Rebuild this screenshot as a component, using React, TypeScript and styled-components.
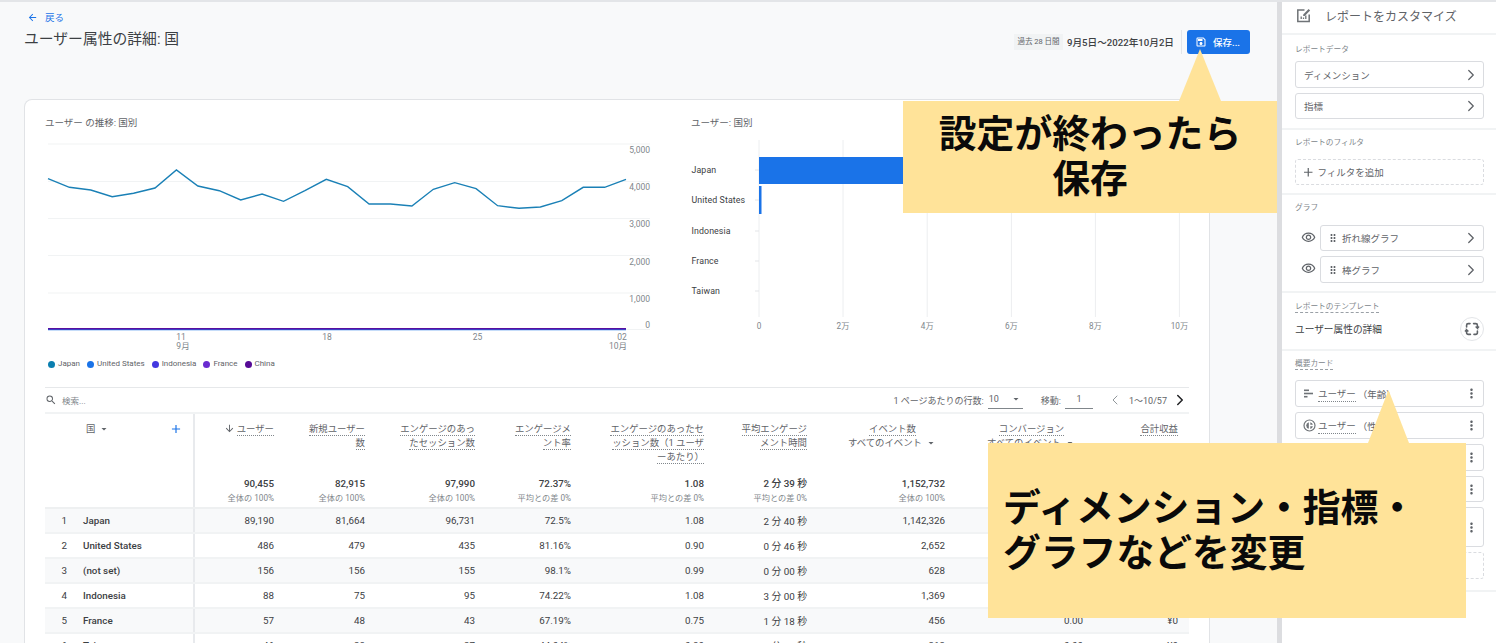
import React from "react";
import styled, { createGlobalStyle } from "styled-components";
import { ChevronLeft, ChevronRight } from "lucide-react";
import {
  MdArrowBack,
  MdArrowDownward,
  MdArrowDropDown,
  MdAdd,
  MdDragIndicator,
  MdMoreVert,
  MdOutlineSave,
  MdOutlineVisibility,
  MdSearch,
} from "react-icons/md";

const FONT = `Roboto, "Noto Sans CJK JP", sans-serif`;

const GlobalStyle = createGlobalStyle`
  html, body { margin: 0; padding: 0; background: #fff; }
  body { font-family: ${FONT}; color: #3c4043; }
  * { box-sizing: border-box; }
`;

const Page = styled.div`
  position: relative;
  width: 1496px;
  height: 643px;
  overflow: hidden;
  display: flex;
  border-top: 2px solid #e3e5e8;
`;

const Main = styled.main`
  width: 1277px;
  flex: none;
  background: #f8f9fa;
  display: flex;
  flex-direction: column;
`;

const Header = styled.header`
  height: 97px;
  flex: none;
  display: flex;
  justify-content: space-between;
  align-items: flex-start;
  padding: 0 27px 0 24px;
`;

const BackLink = styled.a`
  display: flex;
  align-items: center;
  gap: 7px;
  height: 14px;
  margin: 8px 0 0 3px;
  font-size: 9.5px;
  color: #1a73e8;
  svg { font-size: 11px; }
`;

const Title = styled.h1`
  margin: 5px 0 0;
  font-size: 14.8px;
  line-height: 20px;
  font-weight: 400;
  color: #3c4043;
`;

const HeaderActions = styled.div`
  display: flex;
  align-items: center;
  margin-top: 28px;
  height: 24px;
`;

const RangeChip = styled.span`
  width: 49px;
  height: 16px;
  background: #f1f3f4;
  font-size: 7.5px;
  line-height: 15px;
  text-align: center;
  color: #5f6368;
`;

const DateText = styled.span`
  margin-left: 4px;
  padding-bottom: 1px;
  font-size: 9.64px;
  font-weight: 500;
  color: #3c4043;
`;

const Divider = styled.span`
  width: 1px;
  height: 24px;
  margin: 0 5px 0 7px;
  background: #e3e5e8;
`;

const SaveButton = styled.button`
  width: 63px;
  height: 24px;
  border: 0;
  border-radius: 3px;
  background: #1a73e8;
  color: #fff;
  font-family: ${FONT};
  font-size: 9.5px;
  font-weight: 500;
  display: flex;
  align-items: center;
  gap: 6px;
  padding: 0 0 0 8px;
  svg { font-size: 12px; }
`;

const Card = styled.section`
  width: 1186px;
  margin-left: 24px;
  flex: 1;
  background: #fff;
  border: 1px solid #e1e3e6;
  border-bottom: 0;
  border-radius: 8px 8px 0 0;
  padding: 0 20px;
  min-height: 0;
`;

const Charts = styled.div`
  height: 287px;
  display: grid;
  grid-template-columns: 646px 1fr;
`;

const ChartColumn = styled.div`
  display: flex;
  flex-direction: column;
`;

const ChartTitle = styled.h2`
  margin: 16px 0 0;
  height: 14px;
  font-size: 9.5px;
  line-height: 14px;
  font-weight: 400;
  color: #5f6368;
`;

const ChartSvg = styled.svg`
  display: block;
  margin-top: 3px;
  font-family: ${FONT};
`;

const Legend = styled.ul`
  display: flex;
  gap: 7px;
  margin: 1px 0 0;
  padding: 0 0 0 3px;
  list-style: none;
  font-size: 8px;
  line-height: 12px;
  color: #5f6368;
`;

const LegendItem = styled.li<{ $color: string }>`
  display: flex;
  align-items: center;
  gap: 3px;
  &::before {
    content: "";
    width: 7px;
    height: 7px;
    border-radius: 50%;
    background: ${(p) => p.$color};
  }
`;

const Toolbar = styled.div`
  height: 27px;
  display: flex;
  align-items: center;
  border-top: 1px solid #e6e8ea;
  border-bottom: 2px solid #f1f3f4;
  font-size: 9px;
  color: #5f6368;
`;

const SearchBox = styled.div`
  display: flex;
  align-items: center;
  gap: 5px;
  font-size: 8.5px;
  color: #80868b;
  svg { font-size: 12px; color: #5f6368; }
`;

const Pager = styled.div`
  margin-left: auto;
  display: flex;
  align-items: center;
`;

const UnderlinedField = styled.span<{ $width: number; $gap: number }>`
  display: flex;
  align-items: center;
  justify-content: space-between;
  width: ${(p) => p.$width}px;
  height: 17px;
  margin: 0 ${(p) => p.$gap}px 0 4px;
  padding: 0 1px 2px;
  border-bottom: 1px solid #80868b;
  svg { font-size: 12px; }
`;

const JumpValue = styled.span`
  margin: 0 auto;
`;

const PagerRange = styled.span`
  margin: 0 4px 0 6px;
`;

const COLUMNS = "150px 79px 91px 110px 96px 133px 103px 138px 138px 95px";

const Row = styled.div<{ $shaded?: boolean }>`
  display: grid;
  grid-template-columns: ${COLUMNS};
  height: 25px;
  align-items: center;
  font-size: 9.8px;
  color: #3c4043;
  background: ${(p) => (p.$shaded ? "#f8f9fa" : "#fff")};
  border-bottom: 2px solid #f1f3f4;
`;

const HeadRow = styled.div`
  display: grid;
  grid-template-columns: ${COLUMNS};
  height: 57px;
  font-size: 9.4px;
  line-height: 14px;
  color: #5f6368;
`;

const TotalRow = styled.div`
  display: grid;
  grid-template-columns: ${COLUMNS};
  height: 38px;
  border-bottom: 2px solid #eef0f1;
`;

const DimensionHead = styled.div`
  height: 57px;
  border-right: 2px solid #e8eaed;
  display: flex;
  align-items: flex-start;
  padding: 8px 10px 0 41px;
  svg { font-size: 12px; }
`;

const AddDimension = styled.span`
  margin-left: auto;
  display: flex;
  color: #1a73e8;
  svg { font-size: 14px; }
`;

const MetricHead = styled.div<{ $pad?: number }>`
  padding: 8px ${(p) => p.$pad ?? 0}px 0 0;
  text-align: right;
  white-space: nowrap;
`;

const CenteredStack = styled.span`
  display: inline-block;
  text-align: center;
`;

const Dotted = styled.span`
  border-bottom: 1px dotted #80868b;
  padding-bottom: 1px;
`;

const SortIcon = styled.span`
  display: inline-block;
  vertical-align: -2px;
  margin-right: 2px;
  font-size: 11px;
  svg { display: block; }
`;

const SelectLine = styled.span`
  display: inline-flex;
  align-items: center;
  gap: 3px;
  svg { font-size: 12px; }
`;

const BlankCell = styled.div`
  height: 100%;
  border-right: 2px solid #e8eaed;
`;

const TotalCell = styled.div`
  padding-top: 6px;
  text-align: right;
`;

const TotalValue = styled.div`
  font-size: 9.8px;
  line-height: 14px;
  font-weight: 500;
  color: #3c4043;
`;

const TotalNote = styled.div`
  font-size: 8.2px;
  line-height: 14px;
  color: #80868b;
`;

const NameCell = styled.div`
  height: 100%;
  display: flex;
  align-items: center;
  border-right: 2px solid #e8eaed;
  font-weight: 500;
`;

const Rank = styled.span`
  width: 38px;
  padding-right: 16px;
  text-align: right;
  font-weight: 400;
`;

const ValueCell = styled.div`
  text-align: right;
`;

const Sidebar = styled.aside`
  flex: 1;
  min-width: 0;
  background: #fff;
  border-left: 5px solid #dcdde0;
  display: flex;
  flex-direction: column;
`;

const SideTitle = styled.div`
  height: 33px;
  flex: none;
  display: flex;
  align-items: center;
  gap: 14px;
  padding: 0 0 4px 14px;
  border-bottom: 2px solid #f1f3f4;
  font-size: 12px;
  color: #5f6368;
`;

const SideSection = styled.div<{ $height: number; $top?: number }>`
  height: ${(p) => p.$height}px;
  flex: none;
  padding: ${(p) => p.$top ?? 7}px 12px 0 13px;
  border-bottom: 2px solid #f1f3f4;
`;

const SideLabel = styled.div<{ $gap?: number }>`
  font-size: 7.7px;
  line-height: 12px;
  color: #80868b;
  margin-bottom: ${(p) => p.$gap ?? 5}px;
`;

const DottedLabel = styled.span`
  border-bottom: 1px dashed #9aa0a6;
  padding-bottom: 1px;
`;

const SideBox = styled.div<{ $height?: number; $dashed?: boolean; $inset?: number }>`
  height: ${(p) => p.$height ?? 27}px;
  margin-bottom: 5px;
  padding: 0 3px 0 ${(p) => p.$inset ?? 8}px;
  display: flex;
  align-items: center;
  gap: 2px;
  border: 1px ${(p) => (p.$dashed ? "dashed" : "solid")} #dadce0;
  border-radius: 3px;
  font-size: 9.5px;
  color: #5f6368;
  flex: 1;
  min-width: 0;
  white-space: nowrap;
  overflow: hidden;
`;

const BoxEnd = styled.span`
  margin-left: auto;
  width: 18px;
  display: flex;
  justify-content: center;
  font-size: 15px;
  color: #5f6368;
  flex: none;
`;

const AddIcon = styled.span`
  display: flex;
  margin-left: -3px;
  font-size: 14.5px;
`;

const GraphRow = styled.div`
  display: flex;
  align-items: flex-start;
  gap: 4px;
  margin-left: 6px;
`;

const EyeIcon = styled.span`
  display: flex;
  margin-top: 5px;
  font-size: 15px;
  color: #5f6368;
`;

const Grip = styled.span`
  display: flex;
  font-size: 12px;
  margin-right: 1px;
`;

const TemplateRow = styled.div`
  display: flex;
  align-items: center;
  justify-content: space-between;
  font-size: 9.7px;
  color: #3c4043;
`;

const RoundButton = styled.span`
  width: 24px;
  height: 24px;
  border: 1px solid #e3e5e8;
  border-radius: 50%;
  display: flex;
  align-items: center;
  justify-content: center;
`;

const CardIcon = styled.span`
  display: flex;
  width: 13px;
  color: #5f6368;
`;

const CalloutBox = styled.div<{ $left: number; $top: number; $width: number; $height: number; $center?: boolean }>`
  position: absolute;
  left: ${(p) => p.$left}px;
  top: ${(p) => p.$top - 2}px;
  width: ${(p) => p.$width}px;
  height: ${(p) => p.$height}px;
  background: #ffe399;
  display: flex;
  flex-direction: column;
  justify-content: center;
  padding: ${(p) => (p.$center ? "0 0 6px" : "0 0 5px 15px")};
  text-align: ${(p) => (p.$center ? "center" : "left")};
  font-family: "Noto Sans CJK JP", sans-serif;
  font-size: 37.8px;
  font-weight: 700;
  line-height: 44.8px;
  color: #0a0a0a;
  white-space: nowrap;
`;

const CalloutTip = styled.span<{ $left: number; $width: number; $height: number }>`
  position: absolute;
  left: ${(p) => p.$left}px;
  top: ${(p) => -p.$height}px;
  width: ${(p) => p.$width}px;
  height: ${(p) => p.$height}px;
  background: #ffe399;
  clip-path: polygon(50% 0, 100% 100%, 0 100%);
`;

const lineY = [536, 562, 570, 590, 580, 564, 510, 558, 572, 600, 582, 604, 572, 538, 560, 612, 612, 618, 568, 548, 566, 617, 625, 621, 602, 562, 562, 538];
const linePoints = lineY.map((y, i) => `${(48 + (i * 578) / 27).toFixed(1)},${(y / 3).toFixed(1)}`).join(" ");

const yAxis = [
  { label: "5,000", line: 144, text: 153 },
  { label: "4,000", line: 181.5, text: 190 },
  { label: "3,000", line: 218.5, text: 227 },
  { label: "2,000", line: 255.5, text: 265 },
  { label: "1,000", line: 293, text: 302 },
  { label: "0", line: 329.5, text: 328 },
];

const xAxis = [
  { label: "11", sub: "9月", x: 181, subX: 183 },
  { label: "18", x: 327 },
  { label: "25", x: 477.5 },
  { label: "02", sub: "10月", x: 622, subX: 618 },
];

const legend = [
  { name: "Japan", color: "#0b7fb0" },
  { name: "United States", color: "#1a73e8" },
  { name: "Indonesia", color: "#4338e0" },
  { name: "France", color: "#6a2bd0" },
  { name: "China", color: "#560a96" },
];

function LineChart() {
  return (
    <ChartSvg width={626} height={224} viewBox="45 133 626 224">
      {yAxis.map((t) => (
        <g key={t.label}>
          <line x1={48} x2={650} y1={t.line} y2={t.line} stroke="#f1f3f4" strokeWidth={1.2} />
          <text x={650} y={t.text} textAnchor="end" fontSize={8.5} fill="#80868b">
            {t.label}
          </text>
        </g>
      ))}
      <polyline points={linePoints} fill="none" stroke="#1a80b6" strokeWidth={1.4} />
      <line x1={48} x2={626} y1={329.6} y2={329.6} stroke="#1a73e8" strokeWidth={1.5} />
      <line x1={48} x2={626} y1={328.8} y2={328.8} stroke="#5a0fa0" strokeWidth={1.6} />
      {xAxis.map((t) => (
        <g key={t.label} fontSize={8.5} fill="#80868b" textAnchor="middle">
          <text x={t.x} y={340}>
            {t.label}
          </text>
          {t.sub && (
            <text x={t.subX} y={349}>
              {t.sub}
            </text>
          )}
        </g>
      ))}
    </ChartSvg>
  );
}

const barTicks = [
  { label: "0", x: 759 },
  { label: "2万", x: 843 },
  { label: "4万", x: 927.2 },
  { label: "6万", x: 1011.4 },
  { label: "8万", x: 1095.4 },
  { label: "10万", x: 1179.4 },
];

const barRows = [
  { label: "Japan", y: 170 },
  { label: "United States", y: 200 },
  { label: "Indonesia", y: 231 },
  { label: "France", y: 261 },
  { label: "Taiwan", y: 291 },
];

function BarChart() {
  return (
    <ChartSvg width={499} height={224} viewBox="691 133 499 224">
      {barTicks.map((t) => (
        <g key={t.label}>
          <line x1={t.x} x2={t.x} y1={140} y2={317} stroke="#eceef0" strokeWidth={1} />
          <text x={t.x} y={329} textAnchor="middle" fontSize={8.2} fill="#80868b">
            {t.label}
          </text>
        </g>
      ))}
      {barRows.map((r) => (
        <g key={r.label}>
          <line x1={755} x2={759} y1={r.y} y2={r.y} stroke="#e3e5e8" />
          <text x={691.5} y={r.y + 3} fontSize={8.8} letterSpacing={0.1} fill="#3c4043">
            {r.label}
          </text>
        </g>
      ))}
      <rect x={759} y={157} width={375} height={27} fill="#1a73e8" />
      <rect x={759} y={186} width={2.5} height={28} fill="#1a73e8" />
    </ChartSvg>
  );
}

const totals = [
  ["90,455", "全体の 100%"],
  ["82,915", "全体の 100%"],
  ["97,990", "全体の 100%"],
  ["72.37%", "平均との差 0%"],
  ["1.08", "平均との差 0%"],
  ["2 分 39 秒", "平均との差 0%"],
  ["1,152,732", "全体の 100%"],
  ["3,126.00", "全体の 100%"],
  ["¥0", ""],
];

const rows = [
  ["Japan", "89,190", "81,664", "96,731", "72.5%", "1.08", "2 分 40 秒", "1,142,326", "3,098.00", "¥0"],
  ["United States", "486", "479", "435", "81.16%", "0.90", "0 分 46 秒", "2,652", "2.00", "¥0"],
  ["(not set)", "156", "156", "155", "98.1%", "0.99", "0 分 00 秒", "628", "0.00", "¥0"],
  ["Indonesia", "88", "75", "95", "74.22%", "1.08", "3 分 00 秒", "1,369", "0.00", "¥0"],
  ["France", "57", "48", "43", "67.19%", "0.75", "1 分 18 秒", "456", "0.00", "¥0"],
  ["Taiwan", "46", "38", "37", "44.04%", "0.80", "1 分 07 秒", "313", "0.00", "¥0"],
];

function ReportTable() {
  return (
    <>
      <Toolbar>
        <SearchBox>
          <MdSearch />
          検索...
        </SearchBox>
        <Pager>
          1 ページあたりの行数:
          <UnderlinedField $width={35} $gap={18}>
            10
            <MdArrowDropDown />
          </UnderlinedField>
          移動:
          <UnderlinedField $width={28} $gap={14}>
            <JumpValue>1</JumpValue>
          </UnderlinedField>
          <ChevronLeft size={16} strokeWidth={1.3} color="#80868b" />
          <PagerRange>1〜10/57</PagerRange>
          <ChevronRight size={18} strokeWidth={2} color="#202124" />
        </Pager>
      </Toolbar>
      <HeadRow>
        <DimensionHead>
          <SelectLine>
            国
            <MdArrowDropDown />
          </SelectLine>
          <AddDimension>
            <MdAdd />
          </AddDimension>
        </DimensionHead>
        <MetricHead>
          <SortIcon>
            <MdArrowDownward />
          </SortIcon>
          <Dotted>ユーザー</Dotted>
        </MetricHead>
        <MetricHead>
          <Dotted>新規ユーザー</Dotted>
          <br />
          <Dotted>数</Dotted>
        </MetricHead>
        <MetricHead>
          <Dotted>エンゲージのあっ</Dotted>
          <br />
          <Dotted>たセッション数</Dotted>
        </MetricHead>
        <MetricHead>
          <Dotted>エンゲージメ</Dotted>
          <br />
          <Dotted>ント率</Dotted>
        </MetricHead>
        <MetricHead>
          <Dotted>エンゲージのあったセ</Dotted>
          <br />
          <Dotted>ッション数（1 ユーザ</Dotted>
          <br />
          <Dotted>ーあたり）</Dotted>
        </MetricHead>
        <MetricHead>
          <Dotted>平均エンゲージ</Dotted>
          <br />
          <Dotted>メント時間</Dotted>
        </MetricHead>
        <MetricHead $pad={8}>
          <CenteredStack>
            <Dotted>イベント数</Dotted>
            <br />
            <SelectLine>
              すべてのイベント
              <MdArrowDropDown />
            </SelectLine>
          </CenteredStack>
        </MetricHead>
        <MetricHead $pad={7}>
          <CenteredStack>
            <Dotted>コンバージョン</Dotted>
            <br />
            <SelectLine>
              すべてのイベント
              <MdArrowDropDown />
            </SelectLine>
          </CenteredStack>
        </MetricHead>
        <MetricHead>
          <Dotted>合計収益</Dotted>
        </MetricHead>
      </HeadRow>
      <TotalRow>
        <BlankCell />
        {totals.map(([value, note], i) => (
          <TotalCell key={i}>
            <TotalValue>{value}</TotalValue>
            <TotalNote>{note}</TotalNote>
          </TotalCell>
        ))}
      </TotalRow>
      {rows.map(([name, ...values], i) => (
        <Row key={name} $shaded={i % 2 === 0}>
          <NameCell>
            <Rank>{i + 1}</Rank>
            {name}
          </NameCell>
          {values.map((v, j) => (
            <ValueCell key={j}>{v}</ValueCell>
          ))}
        </Row>
      ))}
    </>
  );
}

function CustomizeIcon() {
  return (
    <svg width="15" height="15" viewBox="0 0 15 15" fill="none" stroke="#6f7377" strokeWidth="1.5">
      <path d="M8.5 2H1.8v11.4h11.4V6.5" />
      <path d="M5.2 11V8.6M7.5 11V9.6M9.8 11V7.6" strokeWidth="1.3" />
      <path d="M7.2 6.4 12.6.9l1.5 1.5-5.4 5.5H7.2z" fill="#6f7377" stroke="none" />
    </svg>
  );
}

function ChangeTemplateIcon() {
  return (
    <svg width="16" height="16" viewBox="0 0 16 16" fill="none" stroke="#5f6368" strokeWidth="1.6" strokeLinecap="round">
      <path d="M2.6 6V4.2a1.6 1.6 0 0 1 1.6-1.6H6" />
      <path d="M13.4 10v1.8a1.6 1.6 0 0 1-1.6 1.6H10" />
      <path d="M9.6 2.6h2.2a1.6 1.6 0 0 1 1.6 1.6v3l-1.3-1.2M13.4 7.2l1.2-1.2" />
      <path d="M6.4 13.4H4.2a1.6 1.6 0 0 1-1.6-1.6v-3l1.3 1.2M2.6 8.8 1.4 10" />
    </svg>
  );
}

function BarListIcon() {
  return (
    <svg width="11" height="11" viewBox="0 0 11 11" fill="#6f7377">
      <rect x="1" y="1.5" width="5" height="1.6" />
      <rect x="1" y="4.7" width="9" height="1.6" />
      <rect x="1" y="7.9" width="3.5" height="1.6" />
    </svg>
  );
}

function DonutIcon() {
  return (
    <svg width="13" height="13" viewBox="0 0 13 13" fill="#6f7377">
      <circle cx="6.5" cy="6.5" r="5.5" fill="none" stroke="#6f7377" strokeWidth="1.2" />
      <path d="M7.3 3.2a3.4 3.4 0 0 1 2.6 2.6H7.3z" />
      <path d="M5.8 3.2a3.4 3.4 0 0 0 0 6.6z" />
      <path d="M7.3 7.3h2.6a3.4 3.4 0 0 1-2.6 2.6z" />
    </svg>
  );
}

const summaryCards = [
  { suffix: "（年齢）", height: 27, icon: <BarListIcon /> },
  { suffix: "（性別）", height: 27, icon: <DonutIcon /> },
  { suffix: "（国）", height: 27, icon: <BarListIcon /> },
  { suffix: "（市区町村）", height: 26, icon: <BarListIcon /> },
  { suffix: "（言語）", height: 40, icon: <BarListIcon /> },
];

function CustomizePanel() {
  return (
    <Sidebar>
      <SideTitle>
        <CustomizeIcon />
        レポートをカスタマイズ
      </SideTitle>
      <SideSection $height={95} $top={9}>
        <SideLabel>レポートデータ</SideLabel>
        <SideBox>
          ディメンション
          <BoxEnd>
            <ChevronRight size={18} strokeWidth={1.7} />
          </BoxEnd>
        </SideBox>
        <SideBox $height={26}>
          指標
          <BoxEnd>
            <ChevronRight size={18} strokeWidth={1.7} />
          </BoxEnd>
        </SideBox>
      </SideSection>
      <SideSection $height={65}>
        <SideLabel $gap={10}>レポートのフィルタ</SideLabel>
        <SideBox $height={26} $dashed>
          <AddIcon>
            <MdAdd />
          </AddIcon>
          フィルタを追加
        </SideBox>
      </SideSection>
      <SideSection $height={98}>
        <SideLabel $gap={11}>グラフ</SideLabel>
        <GraphRow>
          <EyeIcon>
            <MdOutlineVisibility />
          </EyeIcon>
          <SideBox $height={26} $inset={6}>
            <Grip>
              <MdDragIndicator />
            </Grip>
            折れ線グラフ
            <BoxEnd>
              <ChevronRight size={18} strokeWidth={1.7} />
            </BoxEnd>
          </SideBox>
        </GraphRow>
        <GraphRow>
          <EyeIcon>
            <MdOutlineVisibility />
          </EyeIcon>
          <SideBox $inset={6}>
            <Grip>
              <MdDragIndicator />
            </Grip>
            棒グラフ
            <BoxEnd>
              <ChevronRight size={18} strokeWidth={1.7} />
            </BoxEnd>
          </SideBox>
        </GraphRow>
      </SideSection>
      <SideSection $height={58} $top={8}>
        <SideLabel $gap={4}>
          <DottedLabel>レポートのテンプレート</DottedLabel>
        </SideLabel>
        <TemplateRow>
          ユーザー属性の詳細
          <RoundButton>
            <ChangeTemplateIcon />
          </RoundButton>
        </TemplateRow>
      </SideSection>
      <SideSection $height={241}>
        <SideLabel $gap={10}>
          <DottedLabel>概要カード</DottedLabel>
        </SideLabel>
        {summaryCards.map((c) => (
          <SideBox key={c.suffix} $height={c.height} $inset={7}>
            <CardIcon>{c.icon}</CardIcon>
            <Dotted>ユーザー</Dotted>
            {c.suffix}
            <BoxEnd>
              <MdMoreVert />
            </BoxEnd>
          </SideBox>
        ))}
        <SideBox $dashed>
          <AddIcon>
            <MdAdd />
          </AddIcon>
          カードを作成
        </SideBox>
      </SideSection>
    </Sidebar>
  );
}

export default function App() {
  return (
    <>
      <GlobalStyle />
      <Page>
        <Main>
          <Header>
            <div>
              <BackLink>
                <MdArrowBack />
                戻る
              </BackLink>
              <Title>ユーザー属性の詳細: 国</Title>
            </div>
            <HeaderActions>
              <RangeChip>過去 28 日間</RangeChip>
              <DateText>9月5日〜2022年10月2日</DateText>
              <Divider />
              <SaveButton>
                <MdOutlineSave />
                保存...
              </SaveButton>
            </HeaderActions>
          </Header>
          <Card>
            <Charts>
              <ChartColumn>
                <ChartTitle>ユーザー の推移: 国別</ChartTitle>
                <LineChart />
                <Legend>
                  {legend.map((l) => (
                    <LegendItem key={l.name} $color={l.color}>
                      {l.name}
                    </LegendItem>
                  ))}
                </Legend>
              </ChartColumn>
              <ChartColumn>
                <ChartTitle>ユーザー: 国別</ChartTitle>
                <BarChart />
              </ChartColumn>
            </Charts>
            <ReportTable />
          </Card>
        </Main>
        <CustomizePanel />
        <CalloutBox $left={903} $top={101} $width={374} $height={112} $center>
          <CalloutTip $left={276} $width={42} $height={52} />
          <span>設定が終わったら</span>
          <span>保存</span>
        </CalloutBox>
        <CalloutBox $left={988} $top={443} $width={478} $height={175}>
          <CalloutTip $left={380} $width={41} $height={53} />
          <span>ディメンション・指標・</span>
          <span>グラフなどを変更</span>
        </CalloutBox>
      </Page>
    </>
  );
}
